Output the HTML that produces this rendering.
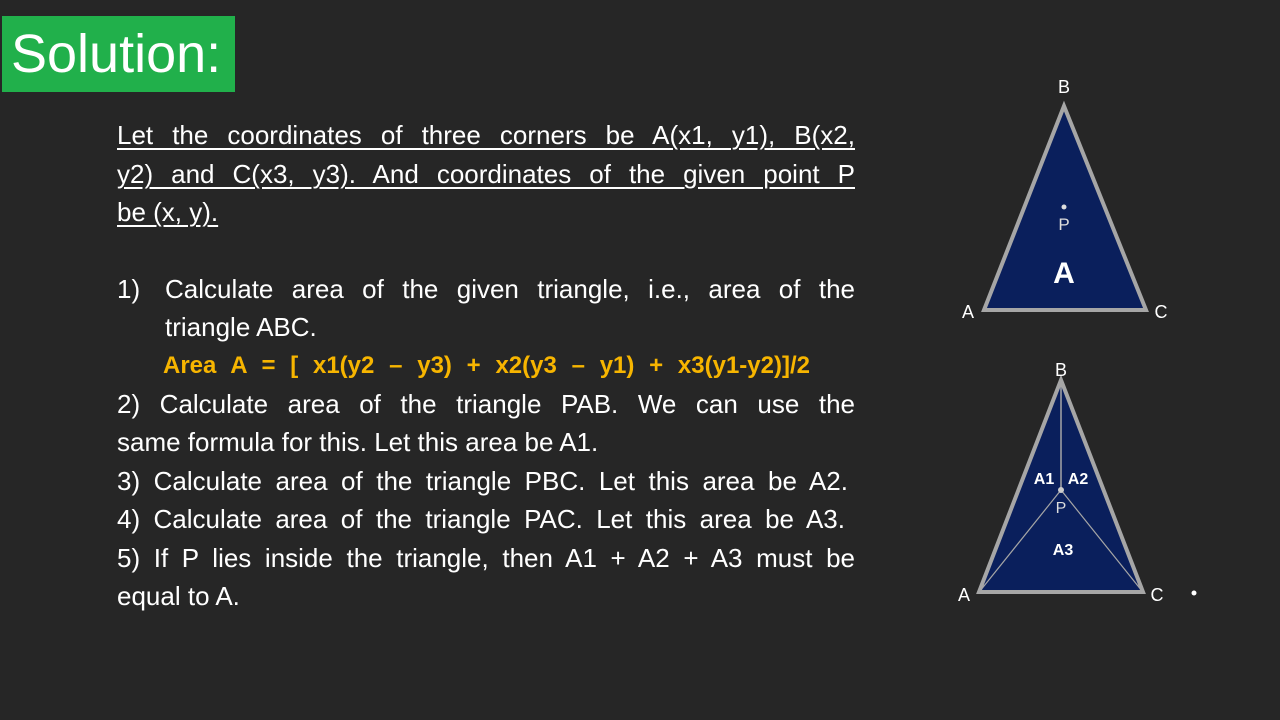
<!DOCTYPE html>
<html><head><meta charset="utf-8"><style>
body{margin:0;width:1280px;height:720px;background:#262626;overflow:hidden;position:relative;font-family:"Liberation Sans",sans-serif;color:#fff}
.l{position:absolute;height:34px;line-height:34px;font-size:26px;white-space:nowrap;text-align:justify;text-align-last:justify}
.n{text-align-last:left}
.u{text-decoration:underline;text-underline-offset:4px;text-decoration-thickness:1.5px}
.y{color:#f7b500;font-weight:bold;font-size:24px}
</style></head><body>
<div style="position:absolute;left:2px;top:16px;width:233px;height:76px;background:#21b04b"></div>
<div style="position:absolute;left:11px;top:20px;font-size:54px;line-height:68px;color:#fff">Solution:</div>

<div class="l u" style="left:117px;top:118px;width:738px">Let the coordinates of three corners be A(x1, y1), B(x2,</div>
<div class="l u" style="left:117px;top:157px;width:738px">y2) and C(x3, y3). And coordinates of the given point P</div>
<div class="l u n" style="left:117px;top:195px;width:110px">be (x, y).</div>
<div class="l n" style="left:117px;top:272px;width:30px">1)</div>
<div class="l" style="left:165px;top:272px;width:690px">Calculate area of the given triangle, i.e., area of the</div>
<div class="l n" style="left:165px;top:310px;width:166px">triangle ABC.</div>
<div class="l y" style="left:163px;top:349px;width:647px">Area A = [ x1(y2 – y3) + x2(y3 – y1) + x3(y1-y2)]/2</div>
<div class="l" style="left:117px;top:387px;width:738px">2) Calculate area of the triangle PAB. We can use the</div>
<div class="l n" style="left:117px;top:425px;width:540px">same formula for this. Let this area be A1.</div>
<div class="l" style="left:117px;top:464px;width:731px">3) Calculate area of the triangle PBC. Let this area be A2.</div>
<div class="l" style="left:117px;top:502px;width:728px">4) Calculate area of the triangle PAC. Let this area be A3.</div>
<div class="l" style="left:117px;top:541px;width:738px">5) If P lies inside the triangle, then A1 + A2 + A3 must be</div>
<div class="l n" style="left:117px;top:579px;width:140px">equal to A.</div>

<svg width="1280" height="720" style="position:absolute;left:0;top:0" font-family="Liberation Sans, sans-serif">
<polygon points="1064,106 984,310 1146,310" fill="#0a1f5c" stroke="#a6a6a6" stroke-width="4" stroke-linejoin="miter"/>
<text x="1064" y="93" fill="#fff" font-size="18" text-anchor="middle">B</text>
<text x="968" y="318" fill="#fff" font-size="18" text-anchor="middle">A</text>
<text x="1161" y="318" fill="#fff" font-size="18" text-anchor="middle">C</text>
<circle cx="1064" cy="207" r="2.5" fill="#ddd"/>
<text x="1064" y="230" fill="#ddd" font-size="17" text-anchor="middle">P</text>
<text x="1064" y="283" fill="#fff" font-size="30" font-weight="bold" text-anchor="middle">A</text>

<polygon points="1061,380 979,592 1143,592" fill="#0a1f5c" stroke="#a6a6a6" stroke-width="4"/>
<line x1="1061" y1="382" x2="1061" y2="490" stroke="#a6a6a6" stroke-width="1.5"/>
<line x1="1061" y1="490" x2="980" y2="591" stroke="#a6a6a6" stroke-width="1.2"/>
<line x1="1061" y1="490" x2="1142" y2="591" stroke="#a6a6a6" stroke-width="1.2"/>
<circle cx="1061" cy="490" r="3" fill="#ccc"/>
<text x="1061" y="376" fill="#fff" font-size="18" text-anchor="middle">B</text>
<text x="964" y="601" fill="#fff" font-size="18" text-anchor="middle">A</text>
<text x="1157" y="601" fill="#fff" font-size="18" text-anchor="middle">C</text>
<text x="1044" y="484" fill="#fff" font-size="16" font-weight="bold" text-anchor="middle">A1</text>
<text x="1078" y="484" fill="#fff" font-size="16" font-weight="bold" text-anchor="middle">A2</text>
<text x="1061" y="513" fill="#ddd" font-size="16" text-anchor="middle">P</text>
<text x="1063" y="555" fill="#fff" font-size="16" font-weight="bold" text-anchor="middle">A3</text>
<circle cx="1194" cy="593" r="2.5" fill="#fff"/>
</svg>
</body></html>
